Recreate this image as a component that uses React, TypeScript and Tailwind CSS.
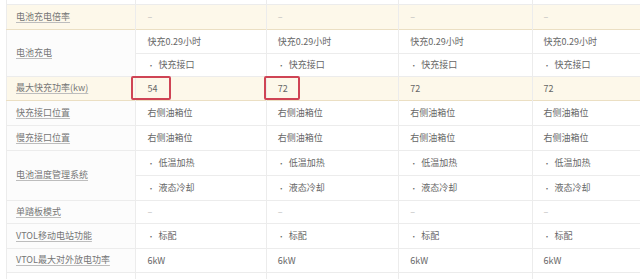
const cols = ['w-[129px]', 'w-[130px]', 'w-[132px]', 'w-[133px]', 'w-[133px]'];

type Row = {
  label: string;
  values: string[][]; // per sub-row, 4 values
  heights: string[];
  yellow?: boolean;
  dash?: boolean;
};

const rows: Row[] = [
  { label: '电池充电倍率', values: [['–', '–', '–', '–']], heights: ['h-[25px]'], yellow: true, dash: true },
  {
    label: '电池充电',
    values: [
      ['快充0.29小时', '快充0.29小时', '快充0.29小时', '快充0.29小时'],
      ['• 快充接口', '• 快充接口', '• 快充接口', '• 快充接口'],
    ],
    heights: ['h-[24px]', 'h-[23px]'],
  },
  { label: '最大快充功率(kw)', values: [['54', '72', '72', '72']], heights: ['h-[24px]'], yellow: true },
  { label: '快充接口位置', values: [['右侧油箱位', '右侧油箱位', '右侧油箱位', '右侧油箱位']], heights: ['h-[25px]'] },
  { label: '慢充接口位置', values: [['右侧油箱位', '右侧油箱位', '右侧油箱位', '右侧油箱位']], heights: ['h-[25px]'] },
  {
    label: '电池温度管理系统',
    values: [
      ['• 低温加热', '• 低温加热', '• 低温加热', '• 低温加热'],
      ['• 液态冷却', '• 液态冷却', '• 液态冷却', '• 液态冷却'],
    ],
    heights: ['h-[25px]', 'h-[25px]'],
  },
  { label: '单踏板模式', values: [['–', '–', '–', '–']], heights: ['h-[23px]'], dash: true },
  { label: 'VTOL移动电站功能', values: [['• 标配', '• 标配', '• 标配', '• 标配']], heights: ['h-[25px]'] },
  { label: 'VTOL最大对外放电功率', values: [['6kW', '6kW', '6kW', '6kW']], heights: ['h-[24px]'] },
];

function Value({ text, dash }: { text: string; dash?: boolean }) {
  if (text.startsWith('• ')) {
    return (
      <span>
        <span className="mr-[4px] text-[7px] align-middle">•</span>
        {text.slice(2)}
      </span>
    );
  }
  return <span className={dash ? 'text-[#bbb]' : ''}>{text}</span>;
}

export default function App() {
  return (
    <div
      className="w-[640px] h-[279px] overflow-hidden bg-white pl-[6px] text-[9px] text-[#666]"
      style={{ fontFamily: '"Noto Sans CJK SC", "Noto Sans", sans-serif' }}
    >
      <table className="table-fixed border-collapse w-[660px] border-l border-[#ececec]">
        <colgroup>
          {cols.map((c, i) => (
            <col key={i} className={c} />
          ))}
        </colgroup>
        <tbody>
          <tr className="h-[4px] border-b border-[#ececec]">
            {cols.map((_, i) => (
              <td key={i} className="border-r border-[#ececec] p-0" />
            ))}
          </tr>
          {rows.map((row, ri) =>
            row.values.map((vals, si) => (
              <tr
                key={`${ri}-${si}`}
                className={`${row.heights[si]} ${row.yellow ? 'bg-[#fdf8ea] border-b border-[#ebdfc3]' : 'border-b border-[#ececec]'}`}
              >
                {si === 0 && (
                  <td
                    rowSpan={row.values.length}
                    className={`border-r border-[#ececec] pl-[9px] p-0 align-middle ${row.yellow ? '' : 'bg-[#fcfcfc]'}`}
                  >
                    <span className="text-[#767676] underline decoration-[#bdbdbd] underline-offset-2">{row.label}</span>
                  </td>
                )}
                {vals.map((v, ci) => (
                  <td key={ci} className="relative border-r border-[#ececec] pl-[11px] p-0 align-middle leading-none">
                    <Value text={v} dash={row.dash} />
                    {ri === 2 && ci === 0 && (
                      <div className="absolute left-[-5px] top-[-1px] w-[40px] h-[24px] border-2 border-[#cf4455] rounded-[2px]" />
                    )}
                    {ri === 2 && ci === 1 && (
                      <div className="absolute left-[-3px] top-[-1px] w-[36px] h-[24px] border-2 border-[#cf4455] rounded-[2px]" />
                    )}
                  </td>
                ))}
              </tr>
            ))
          )}
          <tr className="h-[10px]">
            {cols.map((_, i) => (
              <td key={i} className="border-r border-[#ececec] p-0" />
            ))}
          </tr>
        </tbody>
      </table>
    </div>
  );
}
